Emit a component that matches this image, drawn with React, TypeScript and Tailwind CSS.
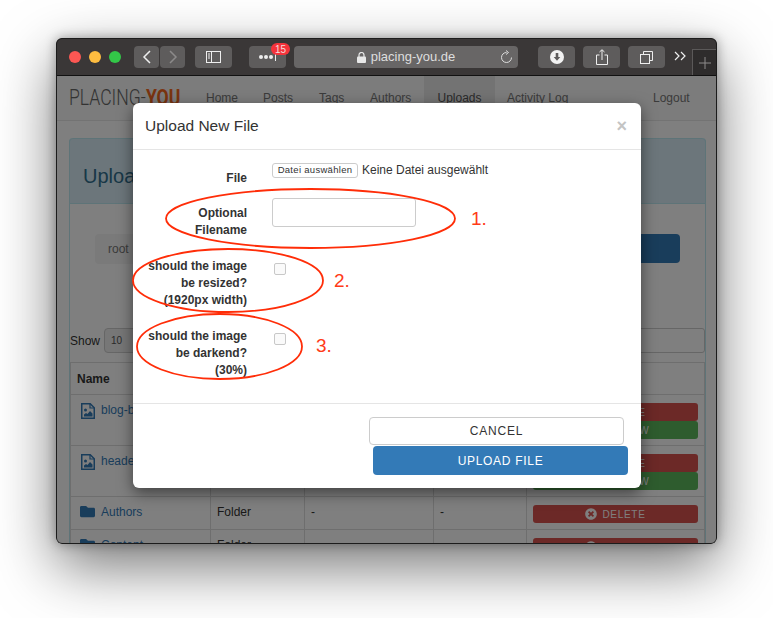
import { FaFolder, FaTimesCircle, FaEye } from "react-icons/fa";

function Tool({ w, children, className = "" }: { w: string; children?: React.ReactNode; className?: string }) {
  return (
    <div className={`relative flex h-[22px] items-center justify-center rounded-[4px] bg-[#5e5c5c] ${w} ${className}`}>
      {children}
    </div>
  );
}

function Toolbar() {
  return (
    <div className="relative flex h-[38px] shrink-0 items-start border-b border-[#111] bg-[#3a3737] pt-[8px]">
      <div className="ml-[13px] mt-[5px] h-3 w-3 rounded-full bg-[#fc5753]" />
      <div className="ml-2 mt-[5px] h-3 w-3 rounded-full bg-[#fdbc40]" />
      <div className="ml-2 mt-[5px] h-3 w-3 rounded-full bg-[#33c748]" />
      <Tool w="w-[25px]" className="ml-[13px]">
        <svg width="10" height="14" viewBox="0 0 10 14" fill="none" stroke="#eee" strokeWidth="1.5"><path d="M8 1 2 7l6 6" /></svg>
      </Tool>
      <Tool w="w-[25px]" className="ml-px">
        <svg width="10" height="14" viewBox="0 0 10 14" fill="none" stroke="#8c8a8a" strokeWidth="1.5"><path d="m2 1 6 6-6 6" /></svg>
      </Tool>
      <Tool w="w-[37px]" className="ml-[10px]">
        <svg width="16" height="12" viewBox="0 0 16 12" fill="none" stroke="#eee" strokeWidth="1"><rect x=".5" y=".5" width="14" height="11" /><path d="M5.5 0v12M2 3h2M2 5h2M2 7h2" /></svg>
      </Tool>
      <Tool w="w-[37px]" className="ml-[17px]">
        <svg width="20" height="10" viewBox="0 0 20 10" fill="#eee"><circle cx="3" cy="5" r="2" /><circle cx="8" cy="5" r="2" /><circle cx="13" cy="5" r="2" /><rect x="17" y="1" width="1" height="8" /></svg>
        <span className="absolute -top-[3px] left-[22px] flex h-[12px] w-[19px] items-center justify-center rounded-full bg-[#f4333b] text-[10px] text-[#f3dcdc]">15</span>
      </Tool>
      <Tool w="w-[224px]" className="ml-2 bg-[#686666]">
        <svg width="9" height="11" viewBox="0 0 9 11" fill="#e8e8e8" className="mr-[5px]"><rect y="4.5" width="9" height="6.5" rx="1" /><path d="M2 5V3a2.5 2.5 0 0 1 5 0v2" fill="none" stroke="#e8e8e8" strokeWidth="1.2" /></svg>
        <span className="text-[13px] text-[#dedede]">placing-you.de</span>
        <svg width="13" height="14" viewBox="0 0 13 14" fill="none" stroke="#ddd" strokeWidth="1" className="absolute right-[5px] top-[4px]"><path d="M6.5 2.5a5 5 0 1 0 5 5M6 .5l2.5 2L6 4.500" /></svg>
      </Tool>
      <Tool w="w-[37px]" className="ml-5">
        <svg width="14" height="14" viewBox="0 0 14 14"><circle cx="7" cy="7" r="7" fill="#f2f2f2" /><path d="M5.700 3h2.600v4h2L7 10.700 3.700 7h2z" fill="#5e5c5c" /></svg>
      </Tool>
      <Tool w="w-[37px]" className="ml-2">
        <svg width="12" height="16" viewBox="0 0 12 16" fill="none" stroke="#eee" strokeWidth="1"><path d="M3.500 6H.5v9.500h11V6h-3M6 11V1M3.500 3 6 .7 8.500 3" /></svg>
      </Tool>
      <Tool w="w-[37px]" className="ml-2">
        <svg width="13" height="13" viewBox="0 0 13 13" fill="none" stroke="#eee" strokeWidth="1"><rect x=".5" y="3.500" width="9" height="9" /><path d="M3.500 3.500v-3h9v9h-3" /></svg>
      </Tool>
      <svg width="12" height="10" viewBox="0 0 12 10" fill="none" stroke="#eee" strokeWidth="1.200" className="ml-[9px] mt-[5px]"><path d="m1 1 4 4-4 4M7 1l4 4-4 4" /></svg>
      <div className="ml-auto flex h-[26px] w-[25px] self-end items-center justify-center border-l border-t border-[#5b5959] bg-[#2e2c2c]">
        <svg width="12" height="12" viewBox="0 0 12 12" stroke="#8d8b8b" strokeWidth="1"><path d="M6 0v12M0 6h12" /></svg>
      </div>
    </div>
  );
}

function Nav() {
  return (
    <div className="flex h-[45px] items-stretch border-b border-[#e7e7e7] bg-[#f8f8f8] text-[12px] text-[#777]">
      <div className="ml-[13px] flex w-[137px] items-center pb-px font-['Roboto'] text-[22px] font-light">
        <div className="origin-left scale-x-[0.8] whitespace-nowrap text-[#666]">
          PLACING-<span className="font-bold text-[#f5691f]">YOU</span>
        </div>
      </div>
      <div className="flex w-[57px] items-center">Home</div>
      <div className="flex w-[56px] items-center">Posts</div>
      <div className="flex w-[51px] items-center">Tags</div>
      <div className="flex w-[54px] items-center">Authors</div>
      <div className="flex w-[71px] items-center justify-center bg-[#e7e7e7] text-[#555]">Uploads</div>
      <div className="ml-3 flex w-[146px] items-center">Activity Log</div>
      <div className="flex items-center">Logout</div>
    </div>
  );
}

function Btn({ color, label, icon }: { color: string; label: string; icon: React.ReactNode }) {
  return (
    <div className={`flex h-[18px] items-center justify-center gap-[5px] rounded-[3px] text-[10px] tracking-[0.7px] text-white ${color}`}>
      {icon}
      {label}
    </div>
  );
}

function FileImage() {
  return (
    <svg width="14" height="16" viewBox="0 0 14 16" className="ml-px mt-[2px] shrink-0">
      <path d="M.75.75h8.500l4 4v10.500H.75z" fill="none" stroke="currentColor" strokeWidth="1.500" />
      <path d="M9 1v4h4" fill="none" stroke="currentColor" strokeWidth="1.200" />
      <circle cx="4.500" cy="7" r="1.500" fill="currentColor" />
      <path d="M3 13.500v-2l2-1.500 1.500 1L9 8l2.500 2.500v3z" fill="currentColor" />
    </svg>
  );
}

function Row({ h, icon, name, type, dash, view }: { h: string; icon: "file" | "folder"; name: string; type?: string; dash?: boolean; view?: boolean }) {
  return (
    <div className={`flex border-b border-[#ddd] text-[12px] ${h}`}>
      <div className="flex w-[140px] items-start gap-[6px] border-l border-[#ddd] pl-[9px] pt-[6px] text-[#337ab7]">
        {icon === "file" ? <FileImage /> : <FaFolder size={15} className="mt-px" />}
        <span>{name}</span>
      </div>
      <div className="w-[94px] border-l border-[#ddd] pl-[6px] pt-[6px] text-[#333]">{type}</div>
      <div className="w-[129px] border-l border-[#ddd] pl-[6px] pt-[6px] text-[#333]">{dash ? "-" : ""}</div>
      <div className="w-[93px] border-l border-[#ddd] pl-[6px] pt-[6px] text-[#333]">{dash ? "-" : ""}</div>
      <div className="flex flex-1 flex-col border-x border-[#ddd] px-[6px] pt-[8px]">
        <Btn color="bg-[#d9534f]" label="DELETE" icon={<FaTimesCircle size={12} />} />
        {view && <Btn color="bg-[#5cb85c]" label="PREVIEW" icon={<FaEye size={12} />} />}
      </div>
    </div>
  );
}

function Page() {
  return (
    <div className="h-[468px] overflow-hidden bg-white">
      <Nav />
      <div className="ml-[13px] mr-[11px] mt-[17px] h-[420px] rounded-t-[4px] border-x border-[#bce8f1]">
        <div className="-mx-px flex h-[66px] items-center rounded-t-[4px] border border-[#bce8f1] bg-[#d9edf7] pl-[13px] pt-[10px] text-[20px] text-[#31708f]">
          Uploads
        </div>
        <div className="mx-[25px] mt-[30px] flex h-[30px] items-start justify-between">
          <div className="flex h-[30px] w-[200px] items-center rounded-[4px] bg-[#f5f5f5] pl-[13px] text-[12px] text-[#777]">root</div>
          <div className="h-[29px] w-[120px] rounded-[4px] bg-[#337ab7]" />
        </div>
        <div className="mt-[64px] flex h-[25px] items-center justify-between text-[12px] text-[#333]">
          <div className="flex items-center gap-[4px]">
            Show
            <div className="flex h-[25px] w-[60px] items-center rounded-[4px] border border-[#ccc] bg-[#eee] pl-[6px] text-[10px] text-[#555]">10</div>
          </div>
          <div className="h-[25px] w-[200px] rounded-[3px] border border-[#ccc]" />
        </div>
        <div className="mt-[9px] border-t border-[#ddd]">
          <div className="flex h-[32px] items-center border-x border-b border-[#ddd] pl-[6px] text-[12px] font-bold text-[#333]">Name</div>
          <Row h="h-[51px]" icon="file" name="blog-banner.jpg" view />
          <Row h="h-[51px]" icon="file" name="header.jpg" view />
          <Row h="h-[33px]" icon="folder" name="Authors" type="Folder" dash />
          <Row h="h-[33px]" icon="folder" name="Content" type="Folder" dash />
        </div>
      </div>
    </div>
  );
}

function FormRow({ label, children, mb }: { label: React.ReactNode; children: React.ReactNode; mb: string }) {
  return (
    <div className={`flex items-start ${mb}`}>
      {label}
      <div className="ml-[25px]">{children}</div>
    </div>
  );
}

function Label({ lines, pt }: { lines: string[]; pt: string }) {
  return (
    <div className={`w-[114px] text-right text-[12px] font-bold leading-[17px] text-[#333] ${pt}`}>
      {lines.map((l) => (
        <div key={l} className="whitespace-nowrap">{l}</div>
      ))}
    </div>
  );
}

function Check() {
  return <div className="ml-[2px] mt-[11px] h-3 w-3 rounded-[2px] border border-[#c8c8c8] bg-[#fafafa]" />;
}

function Modal() {
  return (
    <div className="absolute left-[77px] top-[65px] w-[508px] rounded-[6px] bg-white text-[#333] shadow-[0_5px_15px_rgba(0,0,0,0.5)]">
      <div className="flex h-[47px] items-center justify-between border-b border-[#e5e5e5] pl-3 pr-[14px]">
        <div className="text-[15.5px] text-[#333]">Upload New File</div>
        <div className="text-[18px] font-bold leading-none text-[#c4c4c4]">×</div>
      </div>
      <div className="pb-6 pt-[13px]">
        <FormRow label={<Label lines={["File"]} pt="pt-[7px]" />} mb="mb-[11px]">
          <div className="flex items-start">
            <div className="flex h-[15px] w-[86px] items-center justify-center rounded-[3px] border border-[#ccc] bg-white text-[9.5px] tracking-[0.3px] text-[#333]">Datei auswählen</div>
            <span className="ml-1 text-[12px] leading-[14px] text-[#333]">Keine Datei ausgewählt</span>
          </div>
        </FormRow>
        <FormRow label={<Label lines={["Optional", "Filename"]} pt="pt-[7px]" />} mb="mb-[13px]">
          <div className="h-[29px] w-[144px] rounded-[3px] border border-[#ccc] bg-white" />
        </FormRow>
        <FormRow label={<Label lines={["should the image", "be resized?", "(1920px width)"]} pt="pt-[6px]" />} mb="mb-[13px]">
          <Check />
        </FormRow>
        <FormRow label={<Label lines={["should the image", "be darkend?", "(30%)"]} pt="pt-[6px]" />} mb="mb-0">
          <Check />
        </FormRow>
      </div>
      <div className="flex flex-col border-t border-[#e5e5e5] pb-[13px] pt-[13px] text-[12px]">
        <div className="ml-[236px] flex h-[28px] w-[255px] items-center justify-center rounded-[4px] border border-[#ccc] bg-white tracking-[0.8px] text-[#333]">CANCEL</div>
        <div className="ml-[240px] mt-px flex h-[29px] w-[255px] items-center justify-center rounded-[4px] bg-[#337ab7] tracking-[0.7px] text-white">UPLOAD FILE</div>
      </div>
    </div>
  );
}

function Annotations() {
  return (
    <>
      <svg className="absolute left-0 top-0" width="773" height="618" fill="none" stroke="#ff2d08" strokeWidth="1.800">
        <ellipse cx="310.500" cy="218.500" rx="144.500" ry="29.500" />
        <ellipse cx="228" cy="280.500" rx="95" ry="31.500" />
        <ellipse cx="219.500" cy="346.500" rx="82.500" ry="32.500" />
      </svg>
      <span className="absolute left-[471px] top-[208px] text-[19px] leading-[22px] text-[#ff3b17]">1.</span>
      <span className="absolute left-[334px] top-[270px] text-[19px] leading-[22px] text-[#ff3b17]">2.</span>
      <span className="absolute left-[316px] top-[335px] text-[19px] leading-[22px] text-[#ff3b17]">3.</span>
    </>
  );
}

export default function App() {
  return (
    <div className="relative h-[618px] w-[773px] overflow-hidden bg-white pl-[56px] pt-[38px] font-['Liberation_Sans',sans-serif]">
      <div className="w-[661px] rounded-[6px] shadow-[0_22px_60px_rgba(0,0,0,0.55),0_0_12px_rgba(0,0,0,0.35)]">
        <div className="relative flex h-[506px] w-[661px] flex-col overflow-hidden rounded-[6px]">
          <Toolbar />
          <Page />
          <div className="absolute inset-x-0 bottom-0 top-[38px] bg-[rgba(0,0,0,0.5)]" />
          <Modal />
          <div className="pointer-events-none absolute inset-0 rounded-[6px] border border-[#1c1c1c]" />
        </div>
      </div>
      <Annotations />
    </div>
  );
}
